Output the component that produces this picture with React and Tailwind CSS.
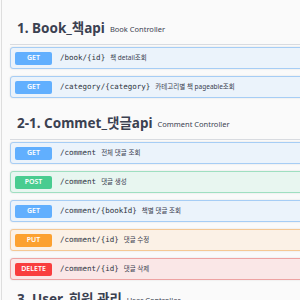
import React from 'react';

const METHOD = {
  GET: { badge: 'bg-[#61affe]', box: 'bg-[#ebf3fb] border-[#a6cdf5]' },
  POST: { badge: 'bg-[#49cc90]', box: 'bg-[#e8f6f0] border-[#9fdfc1]' },
  PUT: { badge: 'bg-[#fca130]', box: 'bg-[#fbf1e6] border-[#f5c894]' },
  DELETE: { badge: 'bg-[#f93e3e]', box: 'bg-[#fae7e7] border-[#eea3a3]' },
};

const sections = [
  {
    title: '1. Book_책api',
    sub: 'Book Controller',
    ops: [
      ['GET', '/book/{id}', '책 detail조회'],
      ['GET', '/category/{category}', '카테고리별 책 pageable조회'],
    ],
  },
  {
    title: '2-1. Commet_댓글api',
    sub: 'Comment Controller',
    ops: [
      ['GET', '/comment', '전체 댓글 조회'],
      ['POST', '/comment', '댓글 생성'],
      ['GET', '/comment/{bookId}', '책별 댓글 조회'],
      ['PUT', '/comment/{id}', '댓글 수정'],
      ['DELETE', '/comment/{id}', '댓글 삭제'],
    ],
  },
  {
    title: '3. User_회원 관리',
    sub: 'User Controller',
    ops: [],
  },
];

function Op({ method, path, desc }) {
  const m = METHOD[method];
  return (
    <div className={`flex items-center h-[22px] border rounded-[3px] pl-[4px] shadow-[0_0_2px_rgba(0,0,0,0.12)] ${m.box}`}>
      <span className={`w-[37px] h-[13px] flex items-center justify-center rounded-[2px] text-white text-[7px] font-semibold font-['Noto_Sans',sans-serif] ${m.badge}`}>
        {method}
      </span>
      <span className="ml-[8px] text-[7.5px] text-[#2f3542] font-['DejaVu_Sans_Mono',monospace]">
        {path}
      </span>
      <span className="ml-[5px] text-[6.5px] text-[#3b4151] font-['Noto_Sans','Noto_Sans_CJK_KR',sans-serif]">
        {desc}
      </span>
    </div>
  );
}

export default function App() {
  return (
    <div className="w-[300px] h-[300px] overflow-hidden bg-[#fafafa]">
      <div className="ml-[1px] h-full border-l border-[#dedede] pl-[8px] w-[340px]">
        {sections.map((s, i) => (
          <div key={i} className={i === 0 ? 'pt-[13px]' : i === 1 ? 'pt-[10px]' : 'pt-[4px]'}>
            <div className="h-[32px] flex items-center gap-[5px] pl-[7px] border-b border-[#d8dbe0] font-['Noto_Sans','Noto_Sans_CJK_KR',sans-serif] text-[#3b4151]">
              <span className="text-[13.5px] font-bold leading-none">{s.title}</span>
              <span className="text-[7.5px] leading-none mt-[2px]">{s.sub}</span>
            </div>
            <div className="flex flex-col gap-[7px] pt-[2px]">
              {s.ops.map((o, j) => (
                <Op key={j} method={o[0]} path={o[1]} desc={o[2]} />
              ))}
            </div>
          </div>
        ))}
      </div>
    </div>
  );
}
